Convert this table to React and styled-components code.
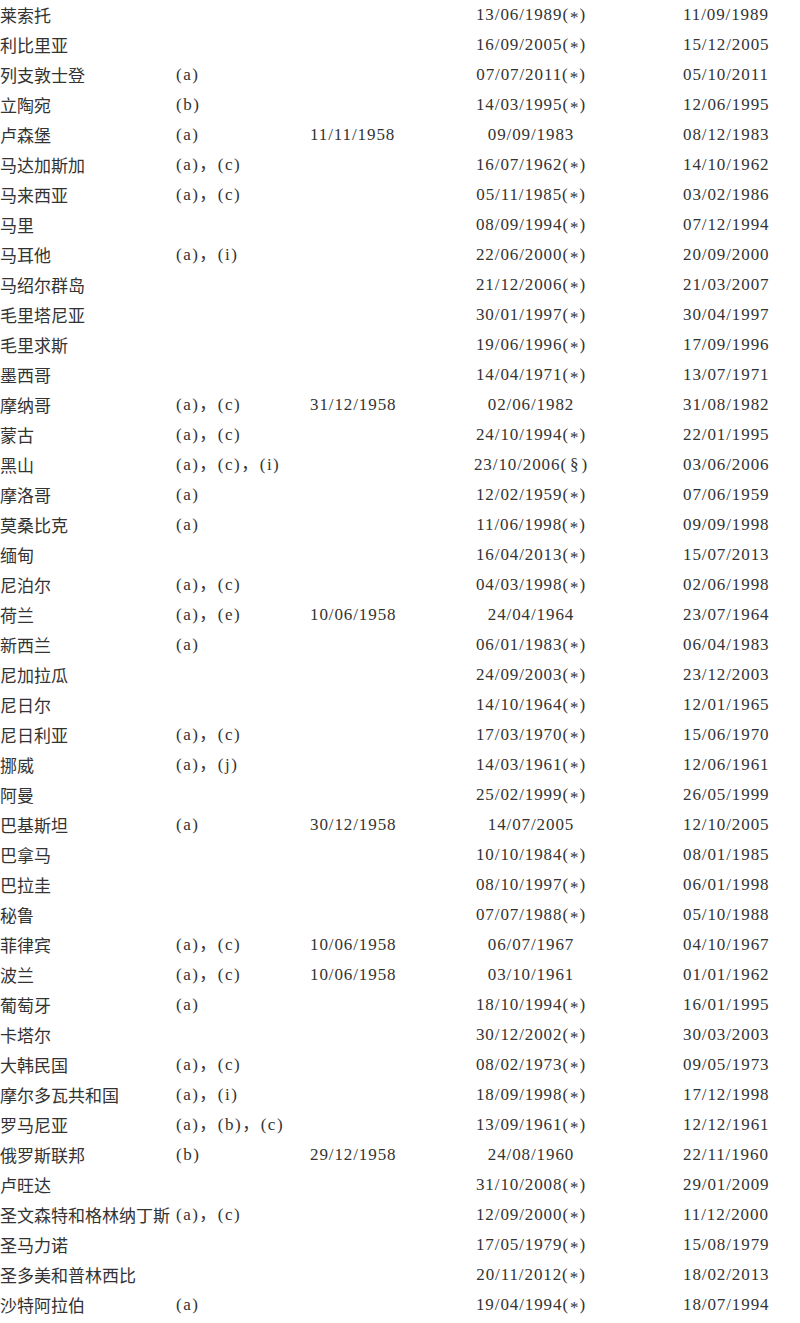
import React from 'react';
import styled, { createGlobalStyle } from 'styled-components';

const GlobalStyle = createGlobalStyle`
  html, body {
    margin: 0;
    padding: 0;
    background: #ffffff;
  }
  body {
    font-family: "Liberation Serif", "Noto Sans CJK SC", serif;
    color: #333333;
  }
`;

const Table = styled.div`
  display: flex;
  flex-direction: column;
  width: 800px;
`;

const Row = styled.div`
  display: grid;
  grid-template-columns: 176px 134px 130px 182px 1fr;
  height: 30px;
  align-items: start;
  font-size: 17px;
  line-height: 30px;
  white-space: nowrap;
  overflow: hidden;
`;

const Name = styled.div`
  font-family: "Noto Sans CJK SC", sans-serif;
  font-weight: 400;
`;

const Note = styled.div`
  letter-spacing: 1.5px;
`;

const DateCell = styled.div`
  height: 30px;
  letter-spacing: 0.9px;
  text-align: ${props => props.$align || 'left'};
  padding-left: ${props => props.$indent || 0}px;
`;

const Mark = styled.span`
  display: inline-block;
  line-height: 1;
  letter-spacing: 0;
  margin: 0 ${props => (props.$wide ? 3 : 1)}px;
  vertical-align: ${props => (props.$wide ? 0 : -3)}px;
`;

const rows = [
  ['莱索托', '', '', '13/06/1989', '*', '11/09/1989'],
  ['利比里亚', '', '', '16/09/2005', '*', '15/12/2005'],
  ['列支敦士登', '(a)', '', '07/07/2011', '*', '05/10/2011'],
  ['立陶宛', '(b)', '', '14/03/1995', '*', '12/06/1995'],
  ['卢森堡', '(a)', '11/11/1958', '09/09/1983', '', '08/12/1983'],
  ['马达加斯加', '(a)，(c)', '', '16/07/1962', '*', '14/10/1962'],
  ['马来西亚', '(a)，(c)', '', '05/11/1985', '*', '03/02/1986'],
  ['马里', '', '', '08/09/1994', '*', '07/12/1994'],
  ['马耳他', '(a)，(i)', '', '22/06/2000', '*', '20/09/2000'],
  ['马绍尔群岛', '', '', '21/12/2006', '*', '21/03/2007'],
  ['毛里塔尼亚', '', '', '30/01/1997', '*', '30/04/1997'],
  ['毛里求斯', '', '', '19/06/1996', '*', '17/09/1996'],
  ['墨西哥', '', '', '14/04/1971', '*', '13/07/1971'],
  ['摩纳哥', '(a)，(c)', '31/12/1958', '02/06/1982', '', '31/08/1982'],
  ['蒙古', '(a)，(c)', '', '24/10/1994', '*', '22/01/1995'],
  ['黑山', '(a)，(c)，(i)', '', '23/10/2006', '§', '03/06/2006'],
  ['摩洛哥', '(a)', '', '12/02/1959', '*', '07/06/1959'],
  ['莫桑比克', '(a)', '', '11/06/1998', '*', '09/09/1998'],
  ['缅甸', '', '', '16/04/2013', '*', '15/07/2013'],
  ['尼泊尔', '(a)，(c)', '', '04/03/1998', '*', '02/06/1998'],
  ['荷兰', '(a)，(e)', '10/06/1958', '24/04/1964', '', '23/07/1964'],
  ['新西兰', '(a)', '', '06/01/1983', '*', '06/04/1983'],
  ['尼加拉瓜', '', '', '24/09/2003', '*', '23/12/2003'],
  ['尼日尔', '', '', '14/10/1964', '*', '12/01/1965'],
  ['尼日利亚', '(a)，(c)', '', '17/03/1970', '*', '15/06/1970'],
  ['挪威', '(a)，(j)', '', '14/03/1961', '*', '12/06/1961'],
  ['阿曼', '', '', '25/02/1999', '*', '26/05/1999'],
  ['巴基斯坦', '(a)', '30/12/1958', '14/07/2005', '', '12/10/2005'],
  ['巴拿马', '', '', '10/10/1984', '*', '08/01/1985'],
  ['巴拉圭', '', '', '08/10/1997', '*', '06/01/1998'],
  ['秘鲁', '', '', '07/07/1988', '*', '05/10/1988'],
  ['菲律宾', '(a)，(c)', '10/06/1958', '06/07/1967', '', '04/10/1967'],
  ['波兰', '(a)，(c)', '10/06/1958', '03/10/1961', '', '01/01/1962'],
  ['葡萄牙', '(a)', '', '18/10/1994', '*', '16/01/1995'],
  ['卡塔尔', '', '', '30/12/2002', '*', '30/03/2003'],
  ['大韩民国', '(a)，(c)', '', '08/02/1973', '*', '09/05/1973'],
  ['摩尔多瓦共和国', '(a)，(i)', '', '18/09/1998', '*', '17/12/1998'],
  ['罗马尼亚', '(a)，(b)，(c)', '', '13/09/1961', '*', '12/12/1961'],
  ['俄罗斯联邦', '(b)', '29/12/1958', '24/08/1960', '', '22/11/1960'],
  ['卢旺达', '', '', '31/10/2008', '*', '29/01/2009'],
  ['圣文森特和格林纳丁斯', '(a)，(c)', '', '12/09/2000', '*', '11/12/2000'],
  ['圣马力诺', '', '', '17/05/1979', '*', '15/08/1979'],
  ['圣多美和普林西比', '', '', '20/11/2012', '*', '18/02/2013'],
  ['沙特阿拉伯', '(a)', '', '19/04/1994', '*', '18/07/1994'],
];

const Flag = ({ mark }) => {
  if (!mark) return null;
  const wide = mark === '§';
  return (
    <>
      (<Mark $wide={wide}>{mark}</Mark>)
    </>
  );
};

export default function App() {
  return (
    <>
      <GlobalStyle />
      <Table>
        {rows.map(([name, note, signed, deposit, mark, force]) => (
          <Row key={name}>
            <Name>{name}</Name>
            <Note>{note}</Note>
            <DateCell>{signed}</DateCell>
            <DateCell $align="center">
              {deposit}
              <Flag mark={mark} />
            </DateCell>
            <DateCell $indent={61}>{force}</DateCell>
          </Row>
        ))}
      </Table>
    </>
  );
}
